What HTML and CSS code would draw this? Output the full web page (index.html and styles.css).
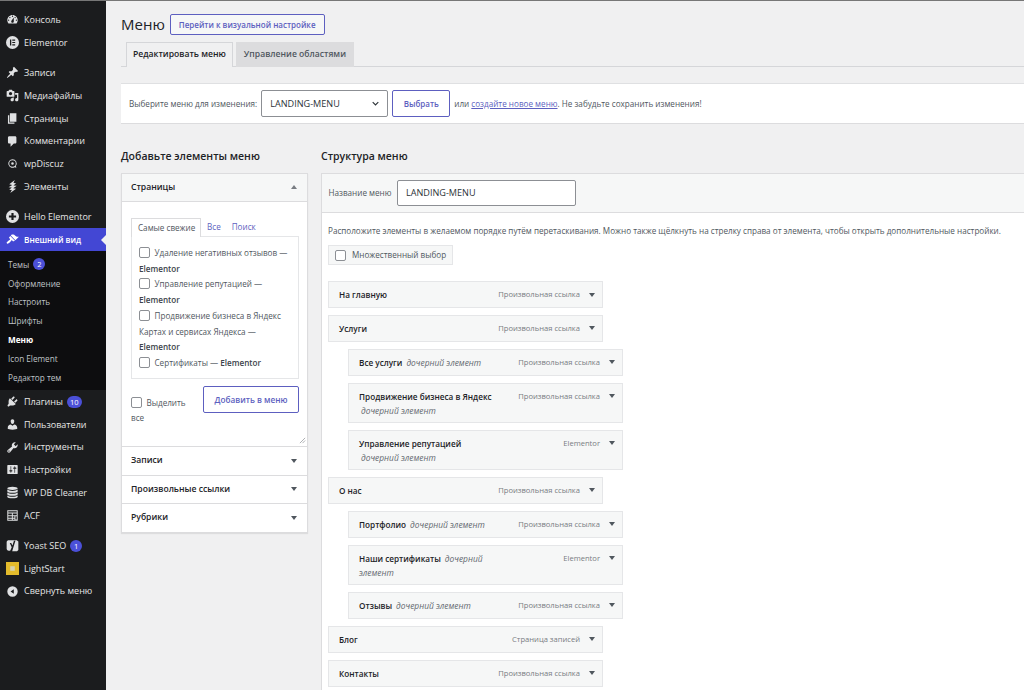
FILE: index.html
```html
<!DOCTYPE html>
<html lang="ru">
<head>
<meta charset="utf-8">
<title>Меню</title>
<link rel="stylesheet" href="styles.css">
</head>
<body>
<aside class="sidebar">
  <nav class="menu">
    <a class="item"><svg class="ic" viewBox="0 0 20 20"><path fill-rule="evenodd" d="M3.76 16h12.48c1.1-1.37 1.76-3.11 1.76-5 0-4.42-3.58-8-8-8s-8 3.58-8 8c0 1.89.66 3.63 1.76 5zM10 4c.55 0 1 .45 1 1s-.45 1-1 1-1-.45-1-1 .45-1 1-1zM6 6c.55 0 1 .45 1 1s-.45 1-1 1-1-.45-1-1 .45-1 1-1zm8 0c.55 0 1 .45 1 1s-.45 1-1 1-1-.45-1-1 .45-1 1-1zm-5.37 5.55L12 7v6c0 1.1-.9 2-2 2s-2-.9-2-2c0-.57.24-1.08.63-1.45zM4 10c.55 0 1 .45 1 1s-.45 1-1 1-1-.45-1-1 .45-1 1-1zm12 0c.55 0 1 .45 1 1s-.45 1-1 1-1-.45-1-1 .45-1 1-1z"/></svg>Консоль</a>
    <a class="item"><svg class="ic" viewBox="1 1 18 18"><path fill-rule="evenodd" d="M10 1a9 9 0 1 0 0 18 9 9 0 0 0 0-18zM6.500 6h1.800v8H6.500zM9.700 6h4v1.600h-4zM9.700 9.200h4v1.600h-4zM9.700 12.400h4V14h-4z"/></svg>Elementor</a>
    <div class="sep"></div>
    <a class="item"><svg class="ic" viewBox="0 0 20 20"><path d="M10.440 3.020l1.820-1.820 6.360 6.350-1.830 1.820c-1.050-.68-2.480-.57-3.410.36l-.75.75c-.92.93-1.040 2.350-.35 3.410l-1.830 1.820-2.410-2.410-2.800 2.790c-.42.42-3.380 2.710-3.800 2.290s1.860-3.390 2.280-3.810l2.790-2.790L4.100 9.360l1.830-1.820c1.050.69 2.480.57 3.400-.36l.75-.75c.93-.92 1.050-2.350.36-3.410z"/></svg>Записи</a>
    <a class="item"><svg class="ic" viewBox="0 0 20 20"><path fill-rule="evenodd" d="M13 11V4c0-.55-.45-1-1-1h-1.670L9 1H5L3.670 3H2c-.55 0-1 .45-1 1v7c0 .55.45 1 1 1h10c.55 0 1-.45 1-1zM7 4.500c1.380 0 2.500 1.120 2.500 2.500S8.380 9.500 7 9.500 4.500 8.380 4.500 7 5.620 4.500 7 4.500zM14 6h5v10.500c0 1.380-1.120 2.500-2.500 2.500S14 17.880 14 16.500s1.120-2.500 2.500-2.500c.17 0 .34.020.5.050V9h-3V6zm-4 8.050V13h2v3.500c0 1.380-1.120 2.500-2.500 2.500S7 17.880 7 16.500 8.120 14 9.500 14c.17 0 .34.020.5.050z"/></svg>Медиафайлы</a>
    <a class="item"><svg class="ic" viewBox="0 0 20 20"><path d="M6 15V2h10v13H6zm-1 1h8v2H3V5h2v11z"/></svg>Страницы</a>
    <a class="item"><svg class="ic" viewBox="0 0 20 20"><path d="M5 2h9c1.100 0 2 .9 2 2v7c0 1.100-.9 2-2 2h-2l-5 5v-5H5c-1.100 0-2-.9-2-2V4c0-1.100.9-2 2-2z"/></svg>Комментарии</a>
    <a class="item"><svg class="ic" viewBox="0 0 20 20"><path fill-rule="evenodd" d="M10 3.500a6.500 6.500 0 1 0 3.200 12.160L16 16.500l-.8-2.700A6.500 6.500 0 0 0 10 3.500zm0 1.500a5 5 0 1 1 0 10 5 5 0 0 1 0-10zm0 3a2 2 0 1 0 0 4 2 2 0 0 0 0-4z"/></svg>wpDiscuz</a>
    <a class="item"><svg class="ic" viewBox="0 0 20 20"><path d="M13.500 0 5 6.500l4.500 1L4 11l5 .5L5 15l4 .5L6.500 20l9-6.500-4.500-1 5.500-3.500-5-.5 4-3.500-4-.5z"/></svg>Элементы</a>
    <div class="sep"></div>
    <a class="item"><svg class="ic" viewBox="1 1 18 18"><path fill-rule="evenodd" d="M10 1a9 9 0 1 0 0 18 9 9 0 0 0 0-18zM8.500 5h3v3.500H15v3h-3.500V15h-3v-3.500H5v-3h3.500z"/></svg>Hello Elementor</a>
    <a class="item current"><svg class="ic" viewBox="0 0 20 20"><path d="M14.480 11.060L7.410 3.990l1.500-1.500c.5-.56 2.300-.47 3.510.32 1.210.8 1.430 1.280 2.910 2.100 1.180.64 2.450 1.260 4.450.85zm-.71.71L6.700 4.700 4.930 6.470c-.39.39-.39 1.020 0 1.410l1.060 1.060c.39.39.39 1.030 0 1.420-.6.6-1.430 1.110-2.210 1.690-.35.26-.7.53-1.010.84C1.430 13.230.99 14.220 1.040 15c.05.78.68 1.410 1.460 1.460.78.05 1.770-.39 3.110-1.730.31-.31.58-.66.84-1.010.58-.78 1.090-1.610 1.690-2.210.39-.39 1.030-.39 1.420 0l1.060 1.060c.39.39 1.020.39 1.410 0z"/></svg>Внешний вид</a>
    <div class="submenu">
      <a class="sub">Темы <span class="badge">2</span></a>
      <a class="sub">Оформление</a>
      <a class="sub">Настроить</a>
      <a class="sub">Шрифты</a>
      <a class="sub active">Меню</a>
      <a class="sub">Icon Element</a>
      <a class="sub">Редактор тем</a>
    </div>
    <a class="item"><svg class="ic" viewBox="0 0 20 20"><path d="M13.110 4.360L9.870 7.600 8 5.730l3.240-3.240c.35-.34 1.050-.2 1.560.32.52.51.66 1.210.31 1.550zm-8 1.770l.91-1.120 9.010 9.010-1.190.84c-.71.71-2.630 1.160-3.820 1.160H6.140L4.900 17.260c-.59.59-1.540.59-2.120 0-.59-.58-.59-1.530 0-2.120l1.240-1.240v-3.880c0-1.130.4-3.190 1.090-3.890zm7.260 3.970l3.240-3.240c.34-.35 1.040-.21 1.550.31.52.51.66 1.210.31 1.550l-3.240 3.250z"/></svg>Плагины <span class="badge">10</span></a>
    <a class="item"><svg class="ic" viewBox="0 0 20 20"><path d="M10 9.250c-2.270 0-2.730-3.440-2.730-3.440C7 4.020 7.820 2 9.970 2c2.160 0 2.980 2.020 2.710 3.810 0 0-.41 3.440-2.680 3.440zm0 2.570L12.720 10c2.390 0 4.520 2.330 4.520 4.530v2.490s-3.650 1.130-7.240 1.130c-3.650 0-7.240-1.130-7.240-1.130v-2.490c0-2.250 1.940-4.480 4.470-4.480z"/></svg>Пользователи</a>
    <a class="item"><svg class="ic" viewBox="0 0 20 20"><path fill-rule="evenodd" d="M16.680 9.770c-1.340 1.340-3.300 1.670-4.950.99l-5.410 6.520c-.99.99-2.590.99-3.580 0s-.99-2.590 0-3.570l6.520-5.420c-.68-1.650-.35-3.610.99-4.950 1.280-1.280 3.120-1.620 4.720-1.060l-2.890 2.890 2.820 2.820 2.860-2.870c.53 1.580.18 3.390-1.080 4.650zM3.810 16.210c.4.39 1.040.39 1.430 0 .4-.4.4-1.040 0-1.430-.39-.4-1.030-.4-1.430 0-.39.39-.39 1.030 0 1.430z"/></svg>Инструменты</a>
    <a class="item"><svg class="ic" viewBox="0 0 20 20"><path fill-rule="evenodd" d="M18 16V4c0-.55-.45-1-1-1H3c-.55 0-1 .45-1 1v12c0 .55.45 1 1 1h14c.55 0 1-.45 1-1zM8 11h1c.55 0 1 .45 1 1s-.45 1-1 1H8v1.500c0 .28-.22.5-.5.5s-.5-.22-.5-.5V13H6c-.55 0-1-.45-1-1s.45-1 1-1h1V5.500c0-.28.22-.5.5-.5s.5.22.5.5V11zm5-2h-1c-.55 0-1-.45-1-1s.45-1 1-1h1V5.500c0-.28.22-.5.5-.5s.5.22.5.5V7h1c.55 0 1 .45 1 1s-.45 1-1 1h-1v5.500c0 .28-.22.5-.5.5s-.5-.22-.5-.5V9z"/></svg>Настройки</a>
    <a class="item"><svg class="ic" viewBox="0 0 20 20"><path d="M10 1c4.400 0 8 1.100 8 2.500S14.400 6 10 6 2 4.900 2 3.500 5.600 1 10 1zM2 5.500C3.500 7 6.500 7.500 10 7.500s6.500-.5 8-2V8c0 1.400-3.600 2.500-8 2.500S2 9.400 2 8zM2 10c1.500 1.500 4.500 2 8 2s6.500-.5 8-2v2.500c0 1.400-3.600 2.500-8 2.500s-8-1.100-8-2.500zM2 14.500c1.500 1.500 4.500 2 8 2s6.500-.5 8-2V16.500c0 1.400-3.600 2.500-8 2.500s-8-1.100-8-2.500z"/></svg>WP DB Cleaner</a>
    <a class="item"><svg class="ic" viewBox="0 0 20 20"><path fill-rule="evenodd" d="M2 2h16v16H2zM3.500 3.500v2h13v-2zM3.500 7v2.500H9V7zM10.500 7v2.500h6V7zM3.500 11v2.500H9V11zM10.500 11v2.500h2.500V11zM14.500 11v5h2v-5zM3.500 15v1.500H9V15zM10.500 15v1.500h2.500V15z"/></svg>ACF</a>
    <div class="sep"></div>
    <a class="item"><svg class="ic" viewBox="0 0 20 20"><path fill-rule="evenodd" d="M4 2h12.500L19 4v13l-2 2H9.500l5-16.500h-2.300L10 10 8 6H5.800l3 6.500-1.800 4.500c0 .4-.6 1-1 1H4c-1 0-3-1-3-3V5c0-2 2-3 3-3z"/></svg>Yoast SEO <span class="badge">1</span></a>
    <a class="item"><svg class="ic" viewBox="0 0 20 20"><rect class="ls-a" x="0" y="0" width="20" height="20"/><rect class="ls-b" x="6.500" y="6.500" width="7" height="7"/></svg>LightStart</a>
    <a class="item"><svg class="ic" viewBox="0 0 20 20"><path fill-rule="evenodd" d="M10 2a8 8 0 1 0 0 16 8 8 0 0 0 0-16zM12 6.500v7L7 10z"/></svg>Свернуть меню</a>
  </nav>
</aside>

<main class="content">
  <header class="title-row">
    <h1>Меню</h1>
    <a class="btn">Перейти к визуальной настройке</a>
  </header>
  <div class="tabs">
    <a class="tab on">Редактировать меню</a>
    <a class="tab">Управление областями</a>
  </div>
  <div class="select-bar">
    <span>Выберите меню для изменения:</span>
    <div class="select">LANDING-MENU<svg class="chev" viewBox="0 0 10 6"><path d="M1 1l4 4 4-4"/></svg></div>
    <a class="btn tall">Выбрать</a>
    <span>или <a class="link">создайте новое меню</a>. Не забудьте сохранить изменения!</span>
  </div>

  <div class="columns">
    <section class="left">
      <h2>Добавьте элементы меню</h2>
      <div class="card">
        <div class="acc-head open">Страницы<i class="tri up"></i></div>
        <div class="acc-body">
          <div class="mini-tabs">
            <span class="mini on">Самые свежие</span>
            <a class="mini link">Все</a>
            <a class="mini link">Поиск</a>
          </div>
          <div class="list">
            <p><i class="cb"></i>Удаление негативных отзывов — <b>Elementor</b></p>
            <p><i class="cb"></i>Управление репутацией — <b>Elementor</b></p>
            <p><i class="cb"></i>Продвижение бизнеса в Яндекс Картах и сервисах Яндекса — <b>Elementor</b></p>
            <p><i class="cb"></i>Сертификаты — <b>Elementor</b></p>
          </div>
          <div class="add-row">
            <p class="all"><i class="cb"></i>Выделить все</p>
            <a class="btn add">Добавить в меню</a>
          </div>
          <svg class="grip" viewBox="0 0 8 8"><path d="M7 1L1 7M7 4L4 7"/></svg>
        </div>
        <div class="acc-head">Записи<i class="tri"></i></div>
        <div class="acc-head">Произвольные ссылки<i class="tri"></i></div>
        <div class="acc-head">Рубрики<i class="tri"></i></div>
      </div>
    </section>

    <section class="right">
      <h2>Структура меню</h2>
      <div class="panel">
        <div class="panel-head">
          <span>Название меню</span>
          <div class="name-input">LANDING-MENU</div>
        </div>
        <div class="panel-body">
          <p class="hint">Расположите элементы в желаемом порядке путём перетаскивания. Можно также щёлкнуть на стрелку справа от элемента, чтобы открыть дополнительные настройки.</p>
          <div class="multi"><i class="cb"></i>Множественный выбор</div>
          <ul class="tree">
            <li class="node"><div class="nt"><b>На главную</b></div><span class="kind">Произвольная ссылка</span><i class="tri"></i></li>
            <li class="node"><div class="nt"><b>Услуги</b></div><span class="kind">Произвольная ссылка</span><i class="tri"></i></li>
            <li class="node child"><div class="nt"><b>Все услуги</b> <em>дочерний элемент</em></div><span class="kind">Произвольная ссылка</span><i class="tri"></i></li>
            <li class="node child two"><div class="nt"><b>Продвижение бизнеса в Яндекс</b><br><em class="ind">дочерний элемент</em></div><span class="kind">Произвольная ссылка</span><i class="tri"></i></li>
            <li class="node child two"><div class="nt"><b>Управление репутацией</b><br><em class="ind">дочерний элемент</em></div><span class="kind">Elementor</span><i class="tri"></i></li>
            <li class="node"><div class="nt"><b>О нас</b></div><span class="kind">Произвольная ссылка</span><i class="tri"></i></li>
            <li class="node child"><div class="nt"><b>Портфолио</b> <em>дочерний элемент</em></div><span class="kind">Произвольная ссылка</span><i class="tri"></i></li>
            <li class="node child two"><div class="nt"><b>Наши сертификаты</b> <em>дочерний<br>элемент</em></div><span class="kind">Elementor</span><i class="tri"></i></li>
            <li class="node child"><div class="nt"><b>Отзывы</b> <em>дочерний элемент</em></div><span class="kind">Произвольная ссылка</span><i class="tri"></i></li>
            <li class="node"><div class="nt"><b>Блог</b></div><span class="kind">Страница записей</span><i class="tri"></i></li>
            <li class="node"><div class="nt"><b>Контакты</b></div><span class="kind">Произвольная ссылка</span><i class="tri"></i></li>
          </ul>
        </div>
      </div>
    </section>
  </div>
</main>
</body>
</html>
```
FILE: styles.css
```css
* { box-sizing: border-box; }
html, body { margin: 0; height: 690px; overflow: hidden; }
body {
  display: flex;
  background: #f0f0f1;
  font-family: "Open Sans", "Noto Sans", sans-serif;
  font-size: 9px;
  line-height: 15.5px;
  color: #3c434a;
  border-top: 1px solid #777;
}
h1, h2, p, ul { margin: 0; padding: 0; }
ul { list-style: none; }
i, em { font-style: normal; }
em { font-style: italic; color: #646970; }

/* sidebar */
.sidebar { width: 106px; flex: none; background: #1b1c1e; color: #f0f0f1; margin-top: -1px; }
.menu { padding-top: 8.5px; }
.item { display: flex; align-items: center; height: 22.75px; padding-left: 6px; font-size: 9px; color: #e6e6e6; position: relative; }
.ic { width: 13px; height: 13px; margin-right: 5px; flex: none; fill: #e0e1e3; }
.sep { height: 7.5px; }
.item.current { background: #4347d4; color: #fff; font-weight: 600; font-size: 8.2px; }
.item.current .ic { fill: #fff; }
.item.current::after {
  content: ""; position: absolute; right: 0; top: 50%; margin-top: -5px;
  border: 5px solid transparent; border-right-color: #f0f0f1; border-left: 0;
}
.submenu { background: #0d0d0f; padding: 4px 0 3px; }
.sub { display: flex; align-items: center; height: 18.9px; padding-left: 8px; font-size: 8.2px; color: #bfc2c6; }
.sub.active { color: #fff; font-weight: 700; }
.badge {
  display: inline-block; min-width: 12px; height: 12px; line-height: 12px; padding: 0 3px;
  margin-left: 4px; border-radius: 6px; background: #4b50d8; color: #fff; text-align: center;
  font-size: 7.5px; font-weight: 400;
}
.ls-a { fill: #e3bb2c; }
.ls-b { fill: #d6d2b0; }

/* main */
.content { flex: 1; min-width: 0; padding-left: 15px; }
.title-row { display: flex; align-items: center; gap: 5px; padding-top: 6px; height: 41px; }
h1 { font-size: 15px; font-weight: 400; color: #1d2327; line-height: 21px; }
.btn {
  display: inline-flex; align-items: center; justify-content: center;
  border: 1px solid #5d5fc0; border-radius: 2px; color: #5d5fc0; background: #f6f7f7;
  font-size: 8px; font-weight: 600; height: 21px; padding: 0 8px;
}
.tabs { display: flex; gap: 3px; padding-left: 5px; height: 25px; border-bottom: 1px solid #d5d6d9; }
.tab { display: flex; align-items: center; height: 25px; padding: 0 8px; background: #dcdcde; color: #50575e; font-size: 8.6px; font-weight: 600; }
.tab.on { background: #f0f0f1; color: #1d2327; border: 1px solid #d5d6d9; border-bottom: 0; padding: 0 6px; }
.select-bar {
  display: flex; align-items: center; margin-top: 16px; height: 41px; padding-left: 8px;
  background: #fff; border-top: 1px solid #dfe0e2; border-bottom: 1px solid #dcdcde; font-size: 8.15px; color: #50575e;
}
.select {
  display: flex; align-items: center; justify-content: space-between;
  width: 127px; height: 27px; margin: 0 4px; padding: 0 8px; background: #fff;
  border: 1px solid #8c8f94; border-radius: 2px; font-size: 9.1px; color: #2c3338;
}
.chev { width: 7px; height: 5px; fill: none; stroke: #2c3338; stroke-width: 1.6; }
.btn.tall { height: 27px; width: 58px; padding: 0; margin-right: 4px; background: #fff; }
.link { color: #5d5fc0; text-decoration: none; }
.select-bar .link { text-decoration: underline; }

.columns { display: flex; margin-top: 25px; }
h2 { font-size: 10.5px; font-weight: 600; color: #1d2327; line-height: 15px; margin-bottom: 8.5px; }
.left { width: 187px; flex: none; margin-right: 13px; }
.right { flex: 1; min-width: 0; }

.card { background: #fff; border: 1px solid #dcdcde; box-shadow: 0 1px 1px rgba(0,0,0,.08); }
.acc-head {
  display: flex; align-items: center; justify-content: space-between; height: 28.5px; padding: 0 10px 0 9px;
  font-size: 8.6px; font-weight: 600; color: #1d2327; border-top: 1px solid #dcdcde;
}
.acc-head:first-child { border-top: 0; }
.acc-head.open { background: #f6f7f7; border-bottom: 1px solid #dcdcde; }
.tri { width: 0; height: 0; flex: none; border: 3px solid transparent; border-top: 4px solid #50575e; border-bottom: 0; }
.tri.up { border-top: 0; border-bottom: 4px solid #787c82; }

.acc-body { position: relative; height: 244px; padding: 15px 8px 0 9px; }
.mini-tabs { display: flex; height: 19px; font-size: 8.15px; align-items: center; }
.mini { padding: 0 6px; color: #50575e; }
.mini.link { color: #5d5fc0; padding: 0 5px 0 6px; }
.mini.on { height: 19px; line-height: 17px; background: #fff; border: 1px solid #dcdcde; border-bottom: 0; position: relative; z-index: 1; margin-bottom: -1px; width: 70px; white-space: nowrap; }
.list { height: 143px; padding: 8px 7px 0; border: 1px solid #e5e6e8; font-size: 8.15px; color: #50575e; }
.list p { line-height: 15.7px; }
.list b { font-weight: 600; color: #3c434a; }
.cb { display: inline-block; width: 11px; height: 11px; margin-right: 4.5px; border: 1px solid #8c8f94; border-radius: 2px; background: #fff; vertical-align: -2px; }
.add-row { display: flex; justify-content: space-between; margin-top: 7px; }
.all { width: 60px; padding-top: 9px; font-size: 8.15px; color: #50575e; line-height: 15px; }
.btn.add { width: 96px; height: 27px; padding: 0; background: #fff; font-size: 8.2px; }
.grip { position: absolute; right: 1px; bottom: 2px; width: 7px; height: 7px; stroke: #8c8f94; fill: none; stroke-width: .8; }

.panel { background: #fff; border: 1px solid #dcdcde; border-right: 0; height: 600px; }
.panel-head { display: flex; align-items: center; height: 39.5px; padding-left: 6.5px; gap: 5.5px; background: #f6f7f7; border-bottom: 1px solid #dcdcde; font-size: 8.15px; color: #50575e; }
.name-input { width: 179px; height: 26px; line-height: 24px; padding-left: 8px; background: #fff; border: 1px solid #8c8f94; border-radius: 2px; font-size: 9.1px; color: #2c3338; }
.panel-body { padding: 10px 6px 0; }
.hint { font-size: 8.15px; color: #50575e; white-space: nowrap; line-height: 15px; }
.multi { display: flex; align-items: center; width: 125px; height: 20px; margin-top: 7px; padding-left: 6px; gap: 1.5px; background: #f6f7f7; border: 1px solid #e5e6e8; font-size: 8.15px; color: #50575e; }
.tree { margin-top: 16px; display: flex; flex-direction: column; gap: 6.7px; }
.node { display: flex; align-items: flex-start; width: 275px; height: 27.3px; padding: 6px 7px 0 10px; background: #f6f7f7; border: 1px solid #e5e6e8; font-size: 7.6px; color: #50575e; line-height: 13.5px; }
.child { margin-left: 20px; }
.two { height: 40.3px; }
.nt { flex: 1; min-width: 0; }
.nt b { font-weight: 600; color: #1d2327; font-size: 8.2px; }
.nt em { font-size: 8.4px; margin-left: 2px; }
.kind { margin-right: 9px; color: #787c82; white-space: nowrap; }
.node .tri { margin-top: 4.5px; }
```
